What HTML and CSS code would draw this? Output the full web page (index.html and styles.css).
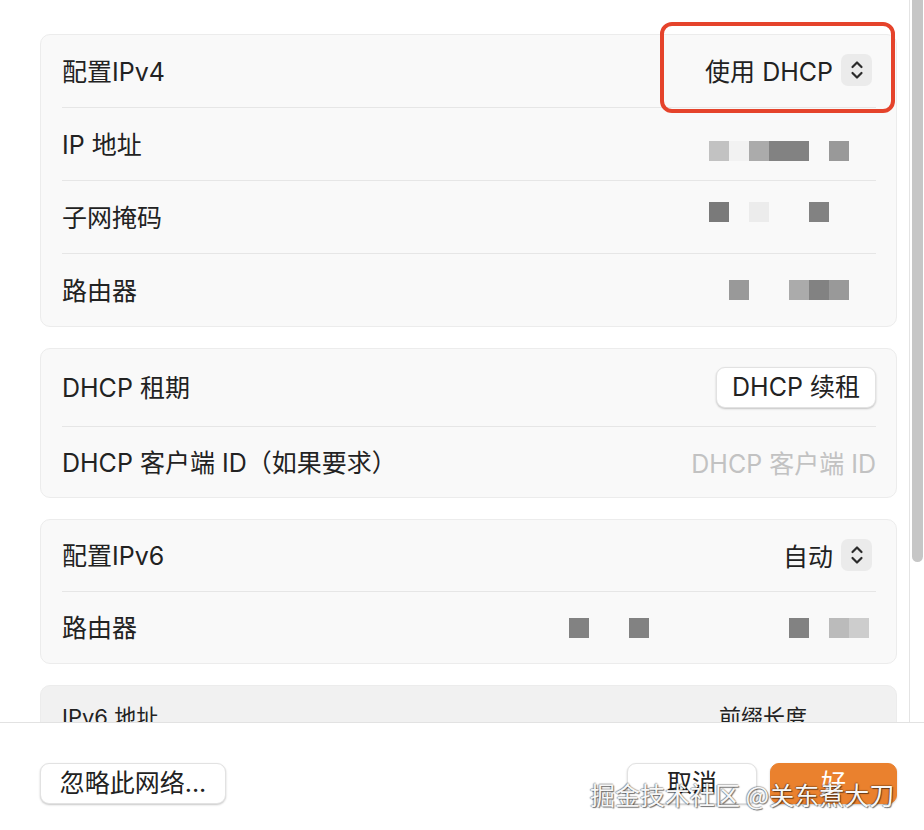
FILE: index.html
```html
<!DOCTYPE html>
<html lang="zh-CN">
<head>
    <meta charset="UTF-8">
    <title>网络详细信息</title>
    <link rel="stylesheet" href="styles.css">
</head>
<body>
    <div class="window">
        <div class="scroll">
            <div class="content">
                <!-- IPv4 -->
                <div class="card">
                    <div class="row">
                        <span class="label">配置IPv4</span>
                        <div class="popup">
                            <span>使用 DHCP</span>
                            <span class="stepper">
                                <svg width="14" height="22" viewBox="0 0 14 22"><path d="M2.5 8 L7 3.5 L11.5 8 M2.5 14 L7 18.5 L11.5 14" fill="none" stroke="#2b2b2b" stroke-width="2.2" stroke-linecap="round" stroke-linejoin="round"/></svg>
                            </span>
                        </div>
                    </div>
                    <div class="row">
                        <span class="label">IP 地址</span>
                        <div class="mosaic down">
                            <i class="c2"></i><i class="f2"></i><i class="b0"></i><i class="g8"></i><i class="g8"></i><i></i><i class="g9"></i>
                        </div>
                    </div>
                    <div class="row">
                        <span class="label">子网掩码</span>
                        <div class="mosaic up">
                            <i class="g7"></i><i></i><i class="ec"></i><i></i><i></i><i class="g8"></i><i></i>
                        </div>
                    </div>
                    <div class="row">
                        <span class="label">路由器</span>
                        <div class="mosaic">
                            <i></i><i class="g9"></i><i></i><i></i><i class="b0"></i><i class="g8"></i><i class="g9"></i>
                        </div>
                    </div>
                </div>

                <!-- DHCP -->
                <div class="card">
                    <div class="row tall">
                        <span class="label">DHCP 租期</span>
                        <button class="btn">DHCP 续租</button>
                    </div>
                    <div class="row short">
                        <span class="label">DHCP 客户端 ID（如果要求）</span>
                        <span class="placeholder">DHCP 客户端 ID</span>
                    </div>
                </div>

                <!-- IPv6 -->
                <div class="card">
                    <div class="row snug">
                        <span class="label">配置IPv6</span>
                        <div class="popup">
                            <span>自动</span>
                            <span class="stepper">
                                <svg width="14" height="22" viewBox="0 0 14 22"><path d="M2.5 8 L7 3.5 L11.5 8 M2.5 14 L7 18.5 L11.5 14" fill="none" stroke="#2b2b2b" stroke-width="2.2" stroke-linecap="round" stroke-linejoin="round"/></svg>
                            </span>
                        </div>
                    </div>
                    <div class="row snug">
                        <span class="label">路由器</span>
                        <div class="mosaic wide">
                            <i class="g8"></i><i></i><i></i><i class="g8"></i><i></i><i></i><i></i><i></i><i></i><i></i><i></i><i class="g8"></i><i></i><i class="bb"></i><i class="cc"></i>
                        </div>
                    </div>
                </div>

                <!-- IPv6 地址表 -->
                <div class="card table">
                    <div class="table-head">
                        <span>IPv6 地址</span>
                        <span class="prefix">前缀长度</span>
                    </div>
                </div>
            </div>

            <div class="scrollbar"><div class="thumb"></div></div>

            <div class="highlight"></div>
        </div>

        <div class="footer">
            <button class="btn ignore">忽略此网络...</button>
            <div class="actions">
                <button class="btn cancel">取消</button>
                <button class="btn primary">好</button>
            </div>
            <div class="watermark">掘金技术社区 @关东煮大刀</div>
        </div>
    </div>
</body>
</html>
```
FILE: styles.css
```css
:root {
    --text: #222;
    --card: #f9f9f9;
    --line: #e6e6e6;
    --orange: #ea812e;
}

body {
    margin: 0;
    background: #fff;
    font-family: 'Inter', 'Noto Sans CJK SC', sans-serif;
    color: var(--text);
}

.window {
    width: 924px;
    height: 830px;
    display: flex;
    flex-direction: column;
}

.scroll {
    position: relative;
    height: 722px;
    display: flex;
    overflow: hidden;
}

.content {
    flex: 1;
    padding: 34px 12px 0 40px;
    display: flex;
    flex-direction: column;
    gap: 21px;
}

.card {
    background: var(--card);
    border: 1px solid #ececec;
    border-radius: 10px;
}

.row {
    height: 72px;
    margin: 0 20px 0 21px;
    display: flex;
    align-items: center;
    justify-content: space-between;
    border-bottom: 1px solid var(--line);
    font-size: 25px;
}

.row .label {
    margin-top: -3px;
}

.row:last-child {
    border-bottom: none;
}

.row.tall {
    height: 77px;
}

.row.short {
    height: 70px;
}

.row.snug {
    height: 71px;
}

.label {
    white-space: nowrap;
}

.popup {
    display: flex;
    align-items: center;
    gap: 8px;
    margin-right: 4px;
    margin-top: -2px;
}

.stepper {
    width: 31px;
    height: 32px;
    border-radius: 7px;
    background: #ebebeb;
    display: flex;
    align-items: center;
    justify-content: center;
}

.placeholder {
    color: #c2c2c2;
}

/* 打码的地址 */
.mosaic {
    display: flex;
    width: 167px;
}

.mosaic.wide {
    width: 307px;
}

.mosaic.down {
    margin-top: 14px;
}

.mosaic.up {
    margin-top: -10px;
}

.mosaic i {
    width: 20px;
    height: 20px;
}

.mosaic .c2 { background: #c2c2c2; }
.mosaic .f2 { background: #f2f2f2; }
.mosaic .ec { background: #ececec; }
.mosaic .b0 { background: #ababab; }
.mosaic .bb { background: #bbbbbb; }
.mosaic .cc { background: #cdcdcd; }
.mosaic .g7 { background: #7a7a7a; }
.mosaic .g8 { background: #828282; }
.mosaic .g9 { background: #999999; }

.btn {
    font-family: inherit;
    font-size: 25px;
    color: var(--text);
    background: #fff;
    border: 1px solid #e2e2e2;
    border-radius: 9px;
    box-shadow: 0 1px 2px rgba(0, 0, 0, 0.22);
    height: 41px;
    padding: 0 16px;
    line-height: 1;
}

.row .btn {
    width: 160px;
    padding: 0;
}

.table {
    background: #f1f1f1;
    height: 80px;
}

.table-head {
    display: flex;
    padding: 13px 21px 0;
    font-size: 22px;
}

.table-head .prefix {
    margin-left: auto;
    margin-right: 68px;
}

.scrollbar {
    width: 14px;
    border-left: 1px solid #e4e4e4;
    position: relative;
}

.thumb {
    position: absolute;
    left: 2px;
    right: 1px;
    top: 0;
    height: 562px;
    background: #c6c6c6;
    border-radius: 0 0 6px 6px;
}

.highlight {
    position: absolute;
    left: 660px;
    top: 22px;
    width: 227px;
    height: 83px;
    border: 4px solid #e5432b;
    border-radius: 12px;
}

.footer {
    position: relative;
    flex: 1;
    border-top: 1px solid #e2e2e2;
    padding: 40px 27px 0 40px;
    display: flex;
    justify-content: space-between;
    align-items: flex-start;
}

.footer .ignore {
    width: 186px;
    padding: 0;
}

.actions {
    display: flex;
    gap: 13px;
}

.actions .cancel {
    width: 130px;
}

.actions .primary {
    width: 127px;
    background: var(--orange);
    border-color: var(--orange);
    color: #fff;
}

.watermark {
    position: absolute;
    left: 590px;
    top: 53px;
    font-size: 25px;
    font-family: 'Noto Sans CJK SC', sans-serif;
    color: #f7f7f7;
    white-space: nowrap;
    text-shadow: 1px 1px 1px rgba(0, 0, 0, 0.55), -1px 0 1px rgba(0, 0, 0, 0.35), 0 -1px 1px rgba(0, 0, 0, 0.25);
}
```
